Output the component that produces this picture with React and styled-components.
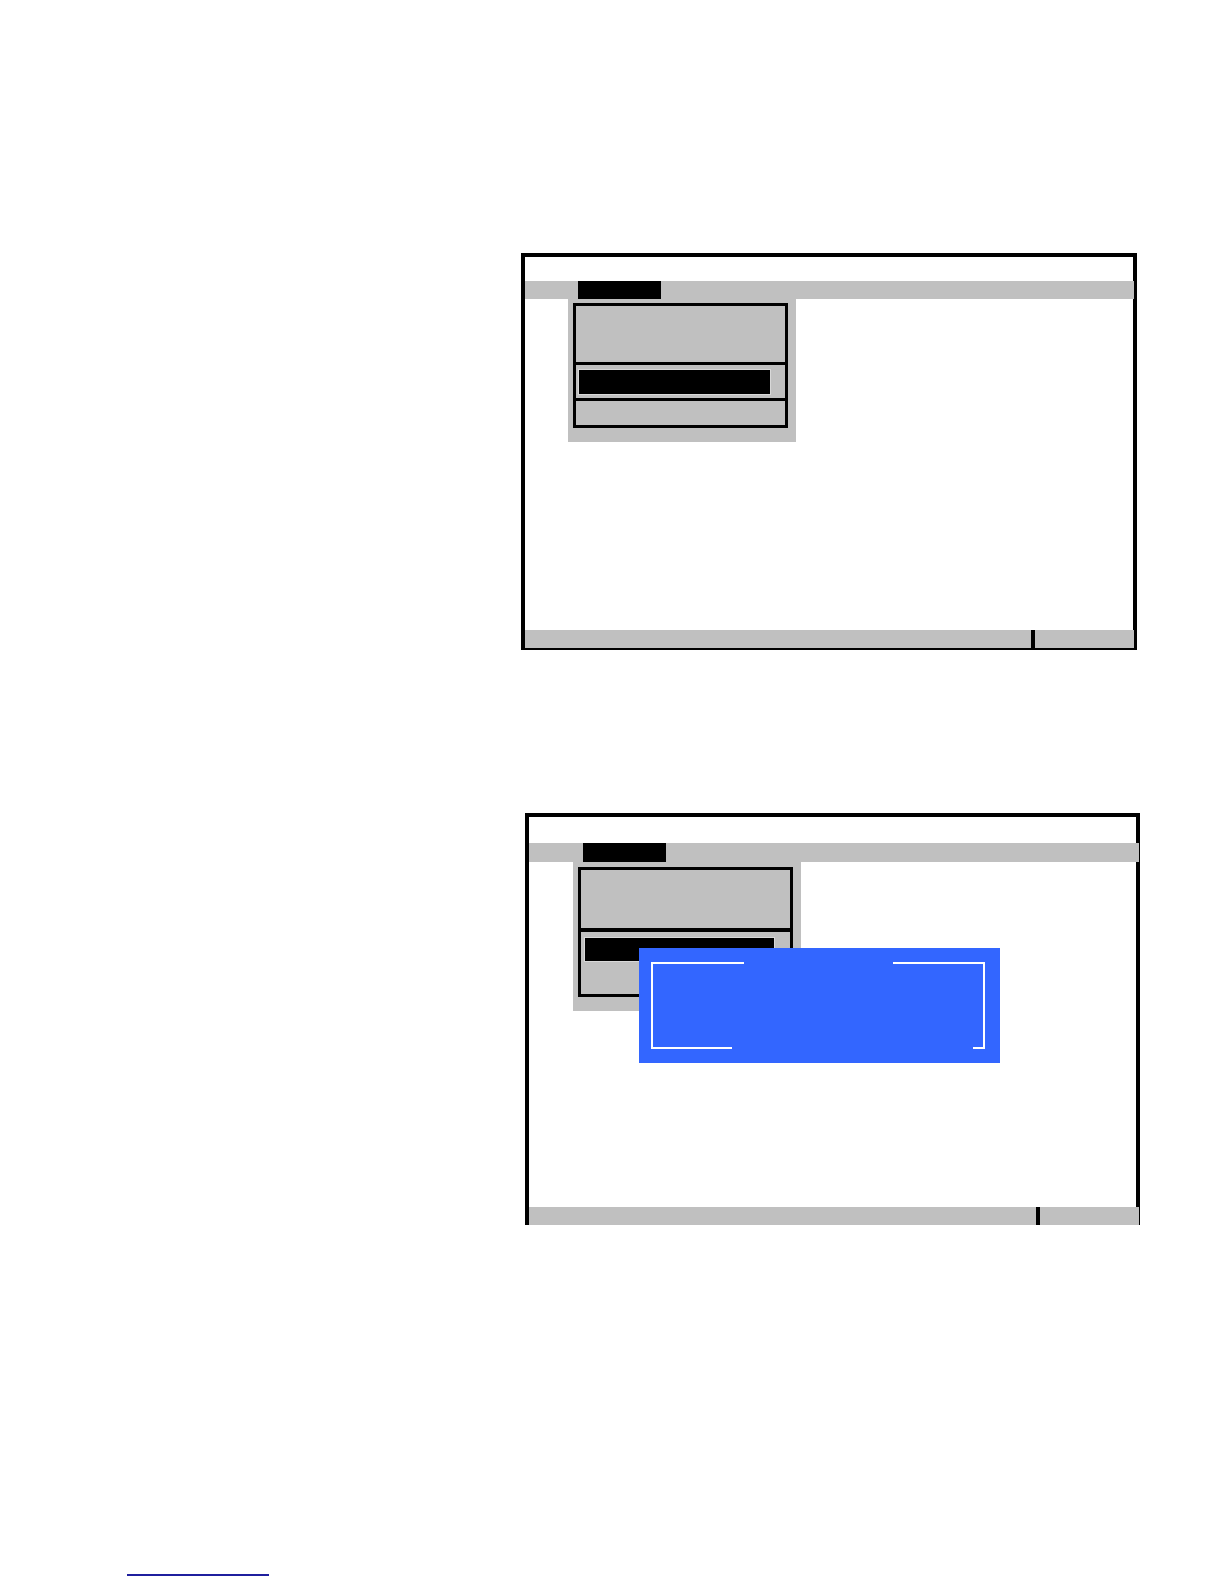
import React from "react";
import styled, { createGlobalStyle } from "styled-components";

const Global = createGlobalStyle`
  html, body { margin: 0; padding: 0; background: #ffffff; }
  body { font-family: "Liberation Sans", Arial, sans-serif; }
`;

const GRAY = "#c0c0c0";

const Page = styled.div`
  width: 1224px;
  min-height: 1584px;
  padding-top: 253px;
  box-sizing: border-box;
  display: flex;
  flex-direction: column;
`;

const Window = styled.div`
  position: relative;
  box-sizing: border-box;
  width: ${(p) => p.$w}px;
  height: ${(p) => p.$h}px;
  margin-left: ${(p) => p.$x}px;
  margin-top: ${(p) => p.$mt}px;
  border: 4px solid #000;
  border-bottom-width: ${(p) => p.$bb}px;
  display: flex;
  flex-direction: column;
  background: #fff;
`;

const TitleSpace = styled.div`
  height: ${(p) => p.$h}px;
  flex: none;
`;

const MenuBar = styled.div`
  height: ${(p) => p.$h}px;
  flex: none;
  background: ${GRAY};
  margin-right: -${(p) => p.$over}px;
  display: flex;
  align-items: flex-start;
`;

const MenuItem = styled.div`
  width: ${(p) => p.$w}px;
  height: 100%;
  flex: none;
`;

const ActiveMenu = styled.div`
  width: 83px;
  height: calc(100% + 1px);
  background: #000;
  flex: none;
`;

const Body = styled.div`
  flex: 1;
  display: flex;
  align-items: flex-start;
`;

const DropPanel = styled.div`
  margin-left: ${(p) => p.$x}px;
  width: 228px;
  box-sizing: border-box;
  background: ${GRAY};
  padding: ${(p) => p.$pt}px 8px 14px 5px;
`;

const MenuBox = styled.div`
  border: 3px solid #000;
  display: flex;
  flex-direction: column;
`;

const Section = styled.div`
  height: ${(p) => p.$h}px;
  display: flex;
  flex-direction: column;
  align-items: flex-start;
`;

const Divider = styled.div`
  height: ${(p) => p.$h}px;
  background: #000;
`;

const Highlight = styled.div`
  margin-top: ${(p) => p.$t}px;
  margin-left: ${(p) => p.$l}px;
  width: ${(p) => p.$w}px;
  height: ${(p) => p.$h}px;
  background: #000;
  outline: 1px solid #d8d8d8;
`;

const StatusBar = styled.div`
  height: 18px;
  flex: none;
  background: ${GRAY};
  margin-right: -${(p) => p.$over}px;
  display: flex;
`;

const StatusPane = styled.div`
  width: ${(p) => p.$w}px;
  flex: none;
`;

const StatusSep = styled.div`
  width: 4px;
  background: #000;
  flex: none;
`;

const StatusRest = styled.div`
  flex: 1;
`;

const Dialog = styled.div`
  position: absolute;
  left: 110px;
  top: 131px;
  width: 361px;
  height: 115px;
  box-sizing: border-box;
  background: #3366ff;
  padding: 14px 15px 14px 12px;
  display: flex;
`;

const Frame = styled.div`
  flex: 1;
  border-left: 2px solid #fff;
  border-right: 2px solid #fff;
  display: flex;
  flex-direction: column;
  justify-content: space-between;
`;

const Edge = styled.div`
  height: 2px;
  display: flex;
  justify-content: space-between;
`;

const Segment = styled.div`
  width: ${(p) => p.$w}px;
  height: 2px;
  background: #fff;
`;

const LinkLine = styled.div`
  margin-left: 127px;
  margin-top: 349px;
  width: 142px;
  height: 2px;
  background: #1f1f9e;
`;

export default function App() {
  return (
    <>
      <Global />
      <Page>
        <Window $w={616} $h={397} $x={521} $mt={0} $bb={2}>
          <TitleSpace $h={24} />
          <MenuBar $h={18} $over={1}>
            <MenuItem $w={53} />
            <ActiveMenu />
          </MenuBar>
          <Body>
            <DropPanel $x={43} $pt={4}>
              <MenuBox>
                <Section $h={56} />
                <Divider $h={3} />
                <Section $h={33}>
                  <Highlight $t={5} $l={3} $w={191} $h={24} />
                </Section>
                <Divider $h={3} />
                <Section $h={24} />
              </MenuBox>
            </DropPanel>
          </Body>
          <StatusBar $over={1}>
            <StatusPane $w={506} />
            <StatusSep />
            <StatusRest />
          </StatusBar>
        </Window>

        <Window $w={615} $h={412} $x={525} $mt={163} $bb={0}>
          <TitleSpace $h={26} />
          <MenuBar $h={19} $over={3}>
            <MenuItem $w={54} />
            <ActiveMenu />
          </MenuBar>
          <Body>
            <DropPanel $x={44} $pt={5}>
              <MenuBox>
                <Section $h={58} />
                <Divider $h={4} />
                <Section $h={62}>
                  <Highlight $t={6} $l={4} $w={189} $h={23} />
                </Section>
              </MenuBox>
            </DropPanel>
          </Body>
          <StatusBar $over={3}>
            <StatusPane $w={507} />
            <StatusSep />
            <StatusRest />
          </StatusBar>
          <Dialog>
            <Frame>
              <Edge>
                <Segment $w={91} />
                <Segment $w={90} />
              </Edge>
              <Edge>
                <Segment $w={79} />
                <Segment $w={10} />
              </Edge>
            </Frame>
          </Dialog>
        </Window>

        <LinkLine />
      </Page>
    </>
  );
}
